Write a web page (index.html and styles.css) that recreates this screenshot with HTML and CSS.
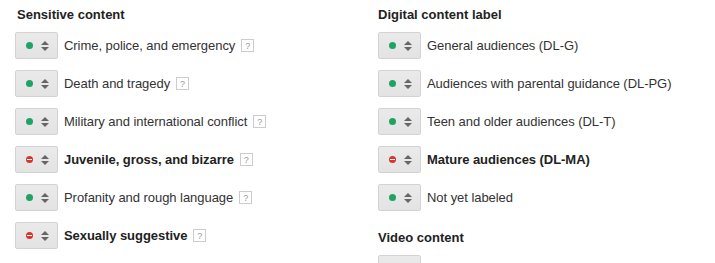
FILE: index.html
```html
<!DOCTYPE html>
<html lang="en">
<head>
    <meta charset="UTF-8">
    <title>Content settings</title>
    <link rel="stylesheet" href="styles.css">
</head>
<body>
    <div class="settings">
        <!-- Sensitive content -->
        <div class="column">
            <h4 class="section-title">Sensitive content</h4>
            <div class="row">
                <button class="state-btn"><span class="dot ok"></span><span class="arrows"></span></button>
                <span class="label">Crime, police, and emergency</span>
                <span class="help">?</span>
            </div>
            <div class="row">
                <button class="state-btn"><span class="dot ok"></span><span class="arrows"></span></button>
                <span class="label">Death and tragedy</span>
                <span class="help">?</span>
            </div>
            <div class="row">
                <button class="state-btn"><span class="dot ok"></span><span class="arrows"></span></button>
                <span class="label">Military and international conflict</span>
                <span class="help">?</span>
            </div>
            <div class="row">
                <button class="state-btn"><span class="dot blocked"></span><span class="arrows"></span></button>
                <span class="label strong">Juvenile, gross, and bizarre</span>
                <span class="help">?</span>
            </div>
            <div class="row">
                <button class="state-btn"><span class="dot ok"></span><span class="arrows"></span></button>
                <span class="label">Profanity and rough language</span>
                <span class="help">?</span>
            </div>
            <div class="row">
                <button class="state-btn"><span class="dot blocked"></span><span class="arrows"></span></button>
                <span class="label strong">Sexually suggestive</span>
                <span class="help">?</span>
            </div>
        </div>

        <!-- Digital content label -->
        <div class="column right">
            <h4 class="section-title">Digital content label</h4>
            <div class="row">
                <button class="state-btn"><span class="dot ok"></span><span class="arrows"></span></button>
                <span class="label">General audiences (DL-G)</span>
            </div>
            <div class="row">
                <button class="state-btn"><span class="dot ok"></span><span class="arrows"></span></button>
                <span class="label">Audiences with parental guidance (DL-PG)</span>
            </div>
            <div class="row">
                <button class="state-btn"><span class="dot ok"></span><span class="arrows"></span></button>
                <span class="label">Teen and older audiences (DL-T)</span>
            </div>
            <div class="row">
                <button class="state-btn"><span class="dot blocked"></span><span class="arrows"></span></button>
                <span class="label strong">Mature audiences (DL-MA)</span>
            </div>
            <div class="row">
                <button class="state-btn"><span class="dot ok"></span><span class="arrows"></span></button>
                <span class="label">Not yet labeled</span>
            </div>

            <h4 class="section-title spaced">Video content</h4>
            <div class="row">
                <button class="state-btn"><span class="dot ok"></span><span class="arrows"></span></button>
            </div>
        </div>
    </div>
</body>
</html>
```

FILE: styles.css
```css
/* Page */
body {
    font-family: 'Liberation Sans', Arial, sans-serif;
    font-size: 13px;
    color: #222;
    background: #fff;
    margin: 0;
    overflow: hidden;
}

.settings {
    display: grid;
    grid-template-columns: 363px 1fr;
    padding: 6px 0 0 15px;
}

/* Headings */
.section-title {
    margin: 0 0 8px 2px;
    font-size: 13px;
    line-height: 18px;
    font-weight: bold;
    color: #222;
}

.right .section-title {
    margin-left: 0;
}

.section-title.spaced {
    margin-top: 18px;
}

/* Setting rows */
.row {
    display: flex;
    align-items: center;
    gap: 6px;
    height: 27px;
    margin-bottom: 11px;
}

.state-btn {
    display: flex;
    align-items: center;
    justify-content: center;
    gap: 8px;
    width: 43px;
    height: 27px;
    padding: 0 0 0 1px;
    border: 1px solid #d3d3d3;
    border-radius: 2px;
    background: linear-gradient(#eaeaea, #e3e3e3);
    cursor: pointer;
}

.dot {
    width: 7px;
    height: 7px;
    border-radius: 50%;
    position: relative;
}

.dot.ok {
    background: #1ea362;
}

.dot.blocked {
    background: #d9342b;
}

.dot.blocked::after {
    content: "";
    position: absolute;
    left: 1px;
    right: 1px;
    top: 3px;
    height: 1px;
    background: #fff;
}

/* up/down caret pair */
.arrows {
    display: flex;
    flex-direction: column;
    gap: 2px;
    width: 8px;
}

.arrows::before,
.arrows::after {
    content: "";
    width: 0;
    height: 0;
    border-left: 4px solid transparent;
    border-right: 4px solid transparent;
}

.arrows::before {
    border-bottom: 4px solid #666;
}

.arrows::after {
    border-top: 4px solid #666;
}

.label {
    color: #333;
    letter-spacing: -0.05px;
}

.label.strong {
    font-weight: bold;
    color: #222;
}

/* Small help box */
.help {
    display: inline-flex;
    align-items: center;
    justify-content: center;
    width: 11px;
    height: 11px;
    margin-left: 0;
    border: 1px solid #ccc;
    font-size: 9px;
    color: #999;
    background: #fff;
}
```
